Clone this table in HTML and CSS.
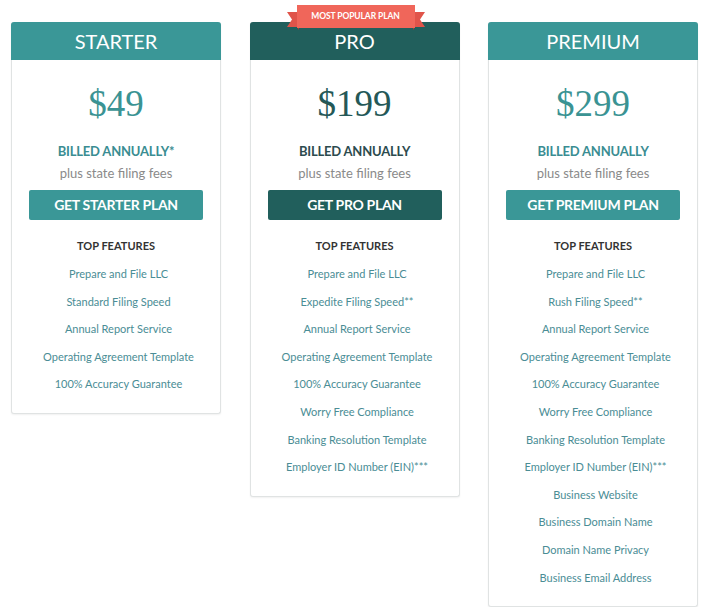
FILE: index.html
```html
<!DOCTYPE html>
<html>
<head>
<meta charset="utf-8">
<link rel="stylesheet" href="styles.css">
</head>
<body>
<div class="plans">
  <div class="card starter">
    <div class="head">STARTER</div>
    <div class="body">
      <div class="price">$49</div>
      <div class="billed">BILLED ANNUALLY*</div>
      <div class="fees">plus state filing fees</div>
      <div class="btn">GET STARTER PLAN</div>
      <div class="top">TOP FEATURES</div>
      <ul class="feats">
        <li>Prepare and File LLC</li>
        <li>Standard Filing Speed</li>
        <li>Annual Report Service</li>
        <li>Operating Agreement Template</li>
        <li>100% Accuracy Guarantee</li>
      </ul>
    </div>
  </div>
  <div class="card pro">
    <svg class="ribbon" width="138" height="27" viewBox="0 0 138 27">
      <polygon points="0,8 12,8 12,23 0,23 5,15.5" fill="#e0544a"/>
      <polygon points="138,8 126,8 126,23 138,23 133,15.5" fill="#e0544a"/>
      <polygon points="10,23 12,23 12,26" fill="#b23a33"/>
      <polygon points="128,23 126,23 126,26" fill="#b23a33"/>
      <rect x="10" y="1" width="118" height="23" fill="#f0665a"/>
    </svg>
    <div class="ribbon-text">MOST POPULAR PLAN</div>
    <div class="head">PRO</div>
    <div class="body">
      <div class="price">$199</div>
      <div class="billed">BILLED ANNUALLY</div>
      <div class="fees">plus state filing fees</div>
      <div class="btn">GET PRO PLAN</div>
      <div class="top">TOP FEATURES</div>
      <ul class="feats">
        <li>Prepare and File LLC</li>
        <li>Expedite Filing Speed**</li>
        <li>Annual Report Service</li>
        <li>Operating Agreement Template</li>
        <li>100% Accuracy Guarantee</li>
        <li>Worry Free Compliance</li>
        <li>Banking Resolution Template</li>
        <li>Employer ID Number (EIN)***</li>
      </ul>
    </div>
  </div>
  <div class="card premium">
    <div class="head">PREMIUM</div>
    <div class="body">
      <div class="price">$299</div>
      <div class="billed">BILLED ANNUALLY</div>
      <div class="fees">plus state filing fees</div>
      <div class="btn">GET PREMIUM PLAN</div>
      <div class="top">TOP FEATURES</div>
      <ul class="feats">
        <li>Prepare and File LLC</li>
        <li>Rush Filing Speed**</li>
        <li>Annual Report Service</li>
        <li>Operating Agreement Template</li>
        <li>100% Accuracy Guarantee</li>
        <li>Worry Free Compliance</li>
        <li>Banking Resolution Template</li>
        <li>Employer ID Number (EIN)***</li>
        <li>Business Website</li>
        <li>Business Domain Name</li>
        <li>Domain Name Privacy</li>
        <li>Business Email Address</li>
      </ul>
    </div>
  </div>
</div>
</body>
</html>
```

FILE: styles.css
```css
html, body {
  margin: 0;
  padding: 0;
  background: #ffffff;
}
body {
  font-family: Lato, "Open Sans", "Liberation Sans", sans-serif;
}
.plans {
  display: flex;
  align-items: flex-start;
  gap: 28.5px;
  padding: 22px 0 0 11px;
}
.card {
  position: relative;
  width: 210px;
  box-sizing: border-box;
  border: 1px solid #e0e3e3;
  border-top: none;
  border-radius: 3px;
  box-shadow: 0 1px 2px rgba(0, 0, 0, 0.06);
  background: #fff;
  text-align: center;
}
.head {
  height: 38px;
  line-height: 38px;
  margin: 0 -1px;
  border-radius: 3px 3px 0 0;
  color: #fff;
  font-size: 20px;
  font-weight: 400;
  background: #3a9797;
}
.pro .head { background: #215f5c; }
.body {
  padding: 24px 17px 15px;
}
.price {
  height: 40px;
  line-height: 40px;
  font-family: "Liberation Serif", "DejaVu Serif", serif;
  font-size: 37px;
  color: #3a9393;
}
.pro .price { color: #245857; }
.billed {
  margin-top: 18px;
  height: 18px;
  line-height: 18px;
  font-size: 13px;
  font-weight: 700;
  letter-spacing: -0.2px;
  color: #3a8d92;
}
.pro .billed { color: #2c4b4e; }
.fees {
  margin-top: 4px;
  height: 18px;
  line-height: 18px;
  font-size: 13px;
  color: #8a8a8a;
}
.btn {
  margin-top: 8px;
  height: 30px;
  line-height: 30px;
  border-radius: 2px;
  background: #3a9797;
  color: #fff;
  font-size: 14px;
  font-weight: 700;
  letter-spacing: -0.3px;
}
.pro .btn { background: #215f5c; }
.top {
  margin-top: 18px;
  height: 16px;
  line-height: 16px;
  font-size: 11px;
  font-weight: 700;
  color: #333;
}
.feats {
  list-style: none;
  margin: 6px 0 0;
  padding: 0 0 0 5px;
}
.feats li {
  height: 27.6px;
  line-height: 27.6px;
  font-size: 11px;
  color: #4a8d95;
  white-space: nowrap;
}
.ribbon {
  position: absolute;
  left: 36px;
  top: -18px;
}
.ribbon-text {
  position: absolute;
  left: 46px;
  top: -17px;
  width: 118px;
  height: 23px;
  line-height: 23px;
  font-size: 8.5px;
  font-weight: 700;
  color: #fff;
  letter-spacing: -0.1px;
  z-index: 2;
}
```
